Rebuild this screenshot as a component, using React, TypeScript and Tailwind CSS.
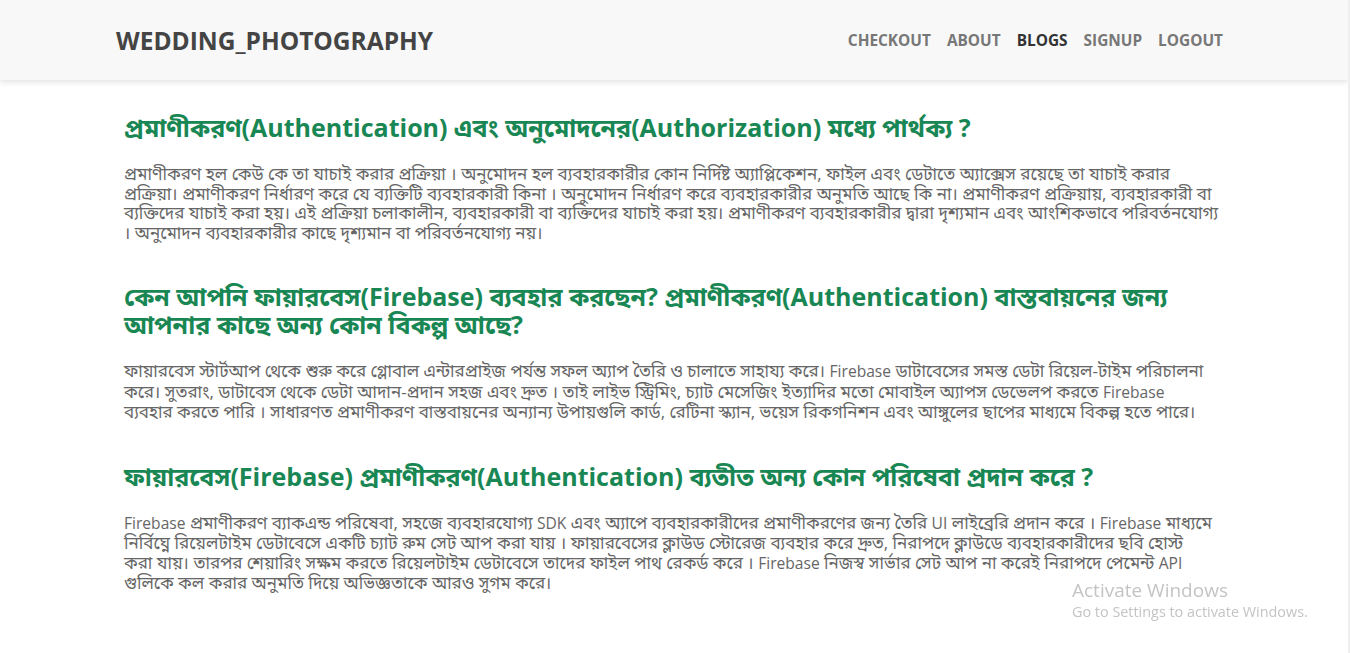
const NAV = ["CHECKOUT", "ABOUT", "BLOGS", "SIGNUP", "LOGOUT"];

const POSTS = [
  {
    title:
      "প্রমাণীকরণ(Authentication) এবং অনুমোদনের(Authorization) মধ্যে পার্থক্য ?",
    measure: "max-w-[1100px]",
    body:
      "প্রমাণীকরণ হল কেউ কে তা যাচাই করার প্রক্রিয়া । অনুমোদন হল ব্যবহারকারীর কোন নির্দিষ্ট অ্যাপ্লিকেশন, ফাইল এবং ডেটাতে অ্যাক্সেস রয়েছে তা যাচাই করার প্রক্রিয়া। প্রমাণীকরণ নির্ধারণ করে যে ব্যক্তিটি ব্যবহারকারী কিনা । অনুমোদন নির্ধারণ করে ব্যবহারকারীর অনুমতি আছে কি না। প্রমাণীকরণ প্রক্রিয়ায়, ব্যবহারকারী বা ব্যক্তিদের যাচাই করা হয়। এই প্রক্রিয়া চলাকালীন, ব্যবহারকারী বা ব্যক্তিদের যাচাই করা হয়। প্রমাণীকরণ ব্যবহারকারীর দ্বারা দৃশ্যমান এবং আংশিকভাবে পরিবর্তনযোগ্য । অনুমোদন ব্যবহারকারীর কাছে দৃশ্যমান বা পরিবর্তনযোগ্য নয়।",
  },
  {
    title:
      "কেন আপনি ফায়ারবেস(Firebase) ব্যবহার করছেন? প্রমাণীকরণ(Authentication) বাস্তবায়নের জন্য আপনার কাছে অন্য কোন বিকল্প আছে?",
    measure: "max-w-[1088px]",
    body:
      "ফায়ারবেস স্টার্টআপ থেকে শুরু করে গ্লোবাল এন্টারপ্রাইজ পর্যন্ত সফল অ্যাপ তৈরি ও চালাতে সাহায্য করে। Firebase ডাটাবেসের সমস্ত ডেটা রিয়েল-টাইম পরিচালনা করে। সুতরাং, ডাটাবেস থেকে ডেটা আদান-প্রদান সহজ এবং দ্রুত । তাই লাইভ স্ট্রিমিং, চ্যাট মেসেজিং ইত্যাদির মতো মোবাইল অ্যাপস ডেভেলপ করতে Firebase ব্যবহার করতে পারি । সাধারণত প্রমাণীকরণ বাস্তবায়নের অন্যান্য উপায়গুলি কার্ড, রেটিনা স্ক্যান, ভয়েস রিকগনিশন এবং আঙ্গুলের ছাপের মাধ্যমে বিকল্প হতে পারে।",
  },
  {
    title:
      "ফায়ারবেস(Firebase) প্রমাণীকরণ(Authentication) ব্যতীত অন্য কোন পরিষেবা প্রদান করে ?",
    measure: "max-w-[1088px]",
    body:
      "Firebase প্রমাণীকরণ ব্যাকএন্ড পরিষেবা, সহজে ব্যবহারযোগ্য SDK এবং অ্যাপে ব্যবহারকারীদের প্রমাণীকরণের জন্য তৈরি UI লাইব্রেরি প্রদান করে । Firebase মাধ্যমে নির্বিঘ্নে রিয়েলটাইম ডেটাবেসে একটি চ্যাট রুম সেট আপ করা যায় । ফায়ারবেসের ক্লাউড স্টোরেজ ব্যবহার করে দ্রুত, নিরাপদে ক্লাউডে ব্যবহারকারীদের ছবি হোস্ট করা যায়। তারপর শেয়ারিং সক্ষম করতে রিয়েলটাইম ডেটাবেসে তাদের ফাইল পাথ রেকর্ড করে । Firebase নিজস্ব সার্ভার সেট আপ না করেই নিরাপদে পেমেন্ট API গুলিকে কল করার অনুমতি দিয়ে অভিজ্ঞতাকে আরও সুগম করে।",
  },
];

const FONT = "font-['Open_Sans','Noto_Sans_Bengali','Noto_Sans',sans-serif]";

// Latin words in the Bangla body copy run a bit narrower than Open Sans at 17px
function Body({ text, measure }: { text: string; measure: string }) {
  const parts = text.split(/([A-Za-z]+)/);
  return (
    <p className={`${measure} text-[17px] leading-[19.5px] text-[#666]`}>
      {parts.map((part, i) =>
        /^[A-Za-z]+$/.test(part) ? (
          <span key={i} className="text-[15.6px]">
            {part}
          </span>
        ) : (
          part
        )
      )}
    </p>
  );
}

export default function App() {
  return (
    <div className={`flex min-h-[653px] bg-white ${FONT}`}>
      <div className="flex-1">
        <header className="h-20 bg-[#f8f8f8] shadow-[0_2px_6px_rgba(0,0,0,0.12)]">
          <div className="mx-auto flex h-full w-[1116px] items-center justify-between pr-[9px] pt-[2px]">
            <span className="text-[24.5px] font-bold text-[#444]">
              WEDDING_PHOTOGRAPHY
            </span>
            <nav className="flex gap-[16px]">
              {NAV.map((item) => (
                <a
                  key={item}
                  href="#"
                  className={
                    item === "BLOGS"
                      ? "text-[15.4px] font-bold text-[#333]"
                      : "text-[15.4px] font-bold text-[#777]"
                  }
                >
                  {item}
                </a>
              ))}
            </nav>
          </div>
        </header>

        <main className="mx-auto w-[1116px] px-2 pt-[33px]">
          {POSTS.map((post) => (
            <section key={post.title} className="mb-[40px]">
              <h2 className="mb-[23px] text-[25px] font-bold leading-[28px] text-[#198754]">
                {post.title}
              </h2>
              <Body text={post.body} measure={post.measure} />
            </section>
          ))}
        </main>
      </div>
      <div className="w-[2px] bg-[#efefef]" />

      <div className="pointer-events-none fixed left-[1072px] top-[578px] font-['Open_Sans',sans-serif] text-[#c4c4c4]">
        <div className="text-[19px] leading-6">Activate Windows</div>
        <div className="text-[14.4px] leading-5">Go to Settings to activate Windows.</div>
      </div>
    </div>
  );
}
